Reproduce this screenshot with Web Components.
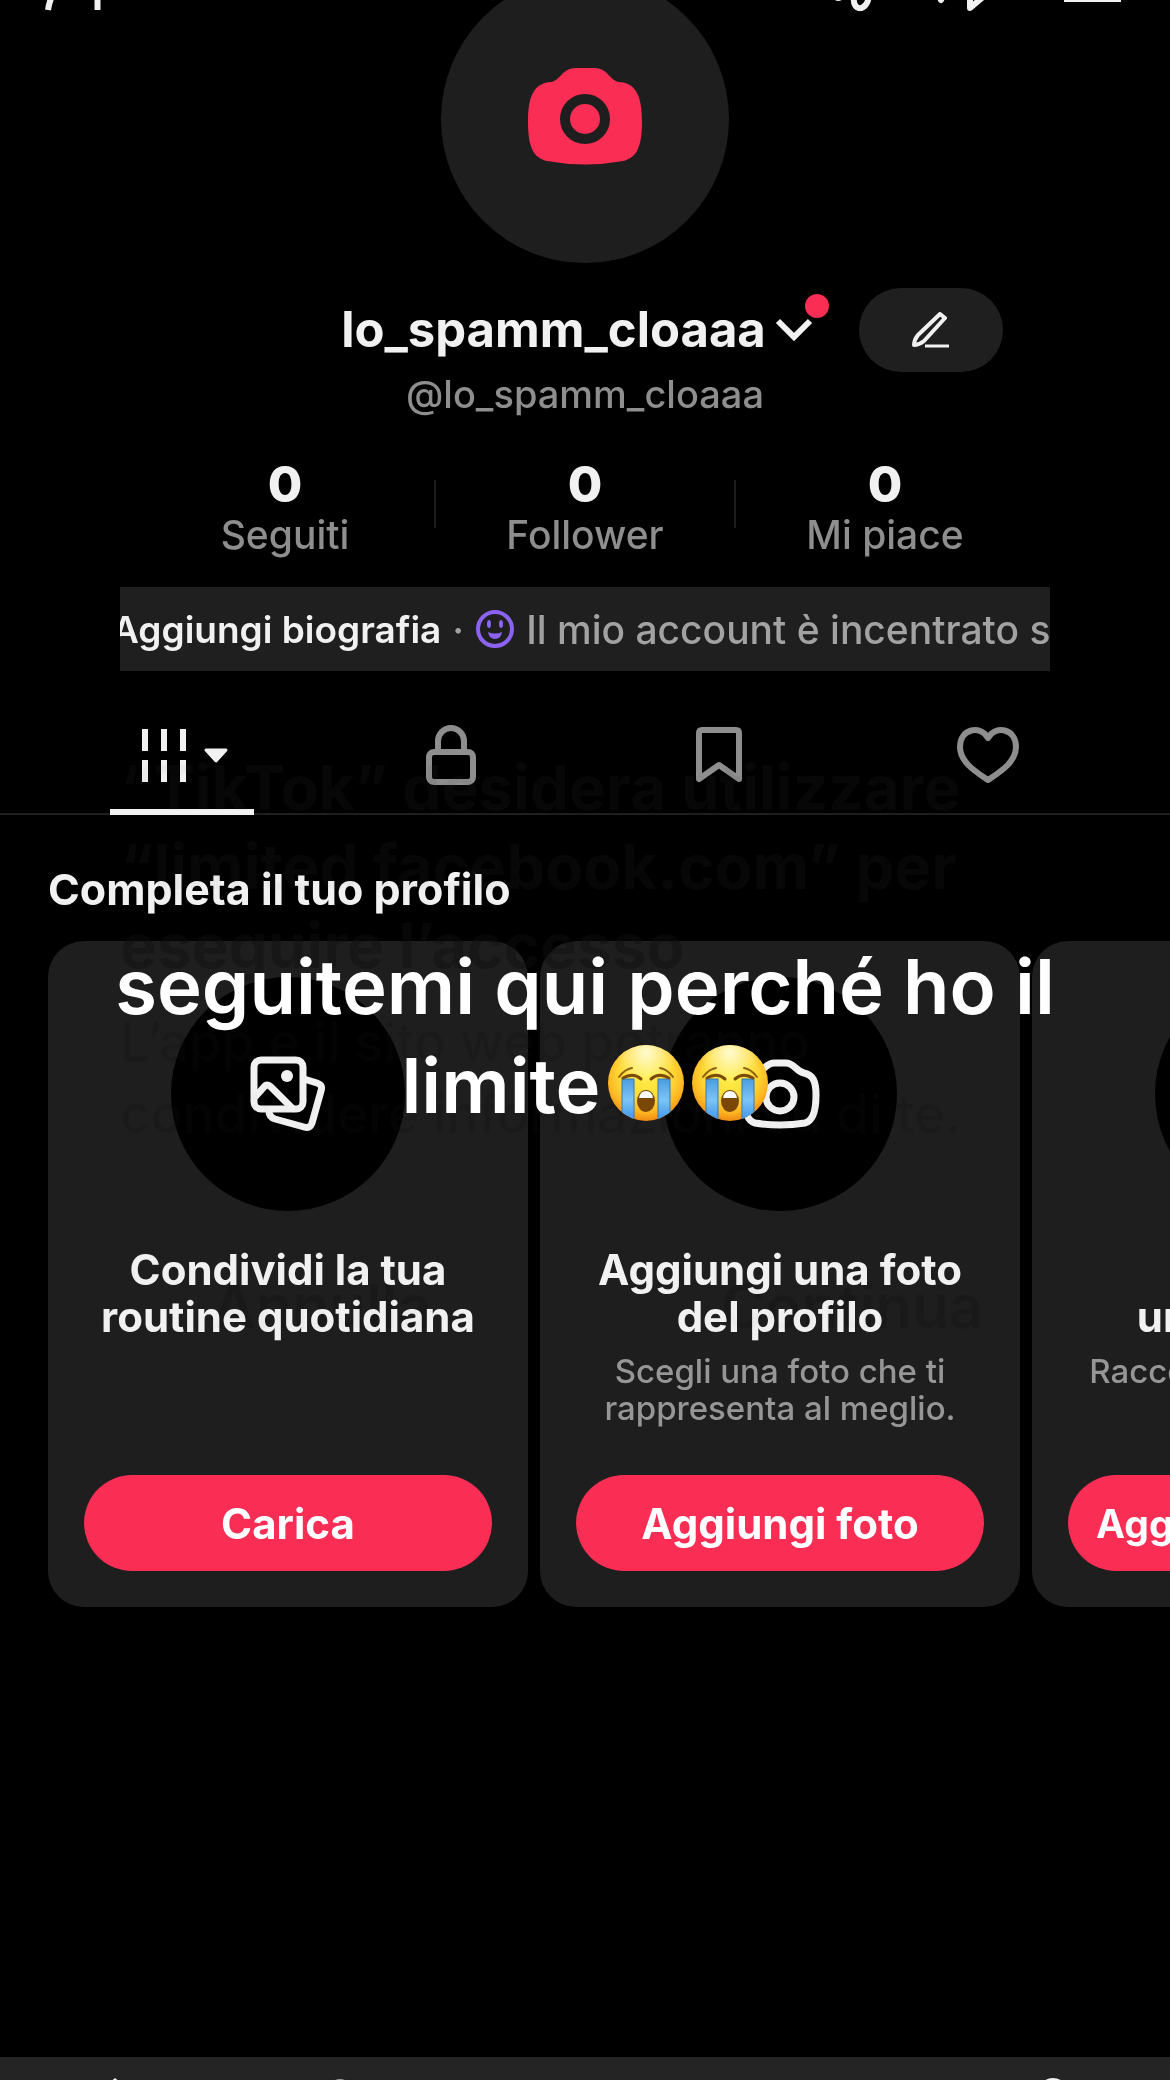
<!DOCTYPE html>
<html lang="it">
<head>
<meta charset="utf-8">
<meta name="viewport" content="width=device-width, initial-scale=1">
<title>lo_spamm_cloaaa</title>
<style>
  body {
    margin: 0;
    background: #000;
    color: #f1f1f1;
    font-family: Inter, "Liberation Sans", sans-serif;
    overflow: hidden;
  }
</style>
</head>
<body>
<profile-page></profile-page>

<script>
class TopBar extends HTMLElement {
  constructor() {
    super();
    this.attachShadow({ mode: "open" });
  }

  static get styles() {
    return /* css */ `
    :host {
      display: flex;
      justify-content: space-between;
      height: 12px;
      padding: 0 48px 0 42px;
      overflow: hidden;
    }
    div {
      display: flex;
      gap: 55px;
    }
    button {
      display: block;
      padding: 0;
      border: 0;
      background: none;
      color: inherit;
    }
    svg {
      display: block;
      fill: none;
      stroke: #f1f1f1;
      stroke-width: 6;
      stroke-linejoin: round;
    }
    `;
  }

  connectedCallback() {
    this.shadowRoot.innerHTML = /* html */ `
    <style>${TopBar.styles}</style>
    <button aria-label="Trova amici"><svg width="62" height="12"><path d="M6 10q1-7 4-14M55.500-4V10"/></svg></button>
    <div>
      <button aria-label="Monete"><svg width="44" height="12"><path d="M2-3q2 2 5 0" /><path d="M20-3C18 12 33 12 35-4"/></svg></button>
      <button aria-label="Condividi"><svg width="72" height="12"><path stroke-linecap="round" d="M8 0l3-6M37-7V8L50-3"/></svg></button>
      <button aria-label="Menu"><svg width="62" height="12"><path d="M4-1h57"/></svg></button>
    </div>`;
  }
}

class ProfileHeader extends HTMLElement {
  constructor() {
    super();
    this.attachShadow({ mode: "open" });
  }

  static get styles() {
    return /* css */ `
    :host {
      display: flex;
      flex-direction: column;
      align-items: center;
    }
    button {
      padding: 0;
      border: 0;
      background: none;
      color: inherit;
      font: inherit;
    }
    svg {
      display: block;
    }
    .avatar {
      display: grid;
      place-items: center;
      width: 288px;
      height: 288px;
      margin-top: -37px;
      border-radius: 50%;
      background: #1e1e1e;
    }
    .name-row {
      display: grid;
      grid-template-columns: 1fr auto 1fr;
      align-items: center;
      align-self: stretch;
      margin-top: 25px;
    }
    .switch {
      grid-column: 2;
      position: relative;
      display: flex;
      align-items: center;
      gap: 9px;
      padding-right: 16px;
    }
    h1 {
      margin: 0;
      font-size: 49px;
      line-height: 60px;
      font-weight: 700;
    }
    .dot {
      position: absolute;
      top: -6px;
      right: 0;
      width: 24px;
      height: 24px;
      border-radius: 50%;
      background: #fa2d54;
    }
    .edit {
      display: grid;
      place-items: center;
      width: 144px;
      height: 84px;
      margin-left: 30px;
      border-radius: 42px;
      background: #1f1f1f;
    }
    p {
      margin: 0;
      color: #8e8e8e;
      font-size: 38px;
      line-height: 44px;
      font-weight: 500;
    }
    `;
  }

  connectedCallback() {
    this.shadowRoot.innerHTML = /* html */ `
    <style>${ProfileHeader.styles}</style>
    <button class="avatar" aria-label="Aggiungi foto del profilo">
      <svg width="114" height="102" viewBox="0 0 114 102">
        <path fill="#fa2d54" d="M48 0H66C80 0 82 13 91 14C107 15 114 26 114 54C114 82 107 90 95 93Q57 100 19 93C7 90 0 82 0 54C0 26 7 15 23 14C32 13 34 0 48 0Z"/>
        <circle cx="57" cy="51" r="20" fill="none" stroke="#1e1e1e" stroke-width="10"/>
      </svg>
    </button>
    <div class="name-row">
      <button class="switch" aria-label="Cambia account">
        <h1><slot></slot></h1>
        <svg width="38" height="26" viewBox="0 0 38 26"><path d="M3 4L19 20L35 4" fill="none" stroke="#f1f1f1" stroke-width="6"/></svg>
        <span class="dot"></span>
      </button>
      <button class="edit" aria-label="Modifica profilo">
        <svg width="38" height="36" viewBox="0 0 38 36" fill="none" stroke="#f1f1f1" stroke-width="4" stroke-linejoin="round">
          <path d="M28 2L33 6L12 29Q7 33 2 33Q2 28 6 23Z"/><path d="M13 34H37" stroke-width="3"/>
        </svg>
      </button>
    </div>
    <p><slot name="handle"></slot></p>`;
  }
}

class ProfileStat extends HTMLElement {
  constructor() {
    super();
    this.attachShadow({ mode: "open" });
  }

  static get styles() {
    return /* css */ `
    :host {
      display: block;
      width: 300px;
      text-align: center;
    }
    a {
      display: block;
      color: inherit;
      text-decoration: none;
    }
    strong {
      display: block;
      font-size: 50px;
      line-height: 58px;
      font-weight: 800;
    }
    span {
      display: block;
      color: #8e8e8e;
      font-size: 39px;
      line-height: 44px;
      font-weight: 500;
    }
    `;
  }

  connectedCallback() {
    this.shadowRoot.innerHTML = /* html */ `
    <style>${ProfileStat.styles}</style>
    <a href="#">
      <strong>${this.getAttribute("value")}</strong>
      <span><slot></slot></span>
    </a>`;
  }
}

class BioStrip extends HTMLElement {
  constructor() {
    super();
    this.attachShadow({ mode: "open" });
  }

  static get styles() {
    return /* css */ `
    :host {
      display: block;
      margin: 30px 120px 0;
      background: #1f1f1f;
    }
    button {
      display: flex;
      align-items: center;
      justify-content: flex-start;
      width: 100%;
      height: 84px;
      padding: 0;
      border: 0;
      overflow: hidden;
      background: none;
      color: #a2a2a2;
      font: inherit;
      font-size: 39px;
      font-weight: 500;
      white-space: nowrap;
    }
    .track {
      display: flex;
      align-items: center;
      gap: 11px;
      margin-left: -8px;
    }
    b {
      color: #f1f1f1;
      font-size: 37px;
      font-weight: 600;
    }
    svg {
      flex: none;
    }
    `;
  }

  connectedCallback() {
    this.shadowRoot.innerHTML = /* html */ `
    <style>${BioStrip.styles}</style>
    <button>
      <span class="track">
        <b><slot name="action"></slot></b>
        <span>·</span>
        <svg width="40" height="40" viewBox="0 0 40 40">
          <circle cx="20" cy="20" r="17" fill="none" stroke="#8b63f0" stroke-width="4"/>
          <ellipse cx="14" cy="15" rx="2" ry="4" fill="#8b63f0"/><ellipse cx="26" cy="15" rx="2" ry="4" fill="#8b63f0"/>
          <path d="M13 23Q20 26 27 23Q26 30 20 30T13 23Z" fill="#8b63f0"/>
        </svg>
        <span><slot></slot></span>
      </span>
    </button>`;
  }
}

class ProfileTabs extends HTMLElement {
  constructor() {
    super();
    this.attachShadow({ mode: "open" });
  }

  static get styles() {
    return /* css */ `
    :host {
      display: grid;
      grid-template-columns: repeat(4, 1fr);
      justify-items: center;
      margin-top: 24px;
      padding: 0 48px;
      box-shadow: inset 0 -2px #1e1e1e;
    }
    button {
      display: flex;
      align-items: center;
      justify-content: center;
      gap: 17px;
      box-sizing: border-box;
      width: 144px;
      height: 120px;
      padding: 6px 0 0;
      border: 0;
      border-bottom: 6px solid transparent;
      background: none;
      color: #8e8e8e;
    }
    button[aria-selected="true"] {
      padding-left: 4px;
      color: #f1f1f1;
      border-color: #f1f1f1;
    }
    svg {
      display: block;
      fill: none;
      stroke: currentColor;
      stroke-width: 6;
      stroke-linejoin: round;
    }
    `;
  }

  connectedCallback() {
    this.setAttribute("role", "tablist");
    this.shadowRoot.innerHTML = /* html */ `
    <style>${ProfileTabs.styles}</style>
    <button role="tab" aria-selected="true" aria-label="Video">
      <svg width="46" height="56" viewBox="0 0 46 56"><path d="M4 2V24M23 2V24M42 2V24M4 33V55M23 33V55M42 33V55"/></svg>
      <svg width="24" height="16" viewBox="0 0 24 16"><path d="M2 3H22L12 14Z" fill="currentColor" stroke-width="3"/></svg>
    </button>
    <button role="tab" aria-selected="false" aria-label="Privati">
      <svg width="50" height="60" viewBox="0 0 50 60"><rect x="3" y="27" width="44" height="30" rx="5"/><path d="M12 27V16a13 13 0 0 1 26 0V27"/></svg>
    </button>
    <button role="tab" aria-selected="false" aria-label="Preferiti">
      <svg width="46" height="58" viewBox="0 0 46 58"><path d="M3 53V7Q3 4 6 4H40Q43 4 43 7V53L23 39Z"/></svg>
    </button>
    <button role="tab" aria-selected="false" aria-label="Mi piace">
      <svg width="62" height="58" viewBox="0 0 62 58"><path d="M31 54C21 47 3 37 3 21C3 2 24-1 31 12C38-1 59 2 59 21C59 37 41 47 31 54Z"/></svg>
    </button>`;
  }
}

class SetupCard extends HTMLElement {
  constructor() {
    super();
    this.attachShadow({ mode: "open" });
  }

  static get styles() {
    return /* css */ `
    :host {
      display: flex;
      flex: none;
      flex-direction: column;
      align-items: center;
      box-sizing: border-box;
      width: 480px;
      min-height: 666px;
      padding: 36px;
      border-radius: 36px;
      background: #1e1e1e;
      text-align: center;
    }
    .disc {
      display: grid;
      place-items: center;
      width: 234px;
      height: 234px;
      border-radius: 50%;
      background: #000;
    }
    h3 {
      margin: 35px 0 0;
      font-size: 42px;
      line-height: 47px;
      font-weight: 700;
      white-space: nowrap;
    }
    p {
      margin: 13px 0 0;
      color: #969696;
      font-size: 33px;
      line-height: 37px;
      font-weight: 500;
      white-space: nowrap;
    }
    button {
      align-self: stretch;
      height: 96px;
      margin-top: auto;
      padding: 0;
      border: 0;
      border-radius: 48px;
      background: #fa2d54;
      color: #fff;
      font: inherit;
      font-size: 42px;
      font-weight: 700;
      white-space: nowrap;
    }
    :host([compact]) button {
      font-size: 39px;
    }
    `;
  }

  connectedCallback() {
    this.shadowRoot.innerHTML = /* html */ `
    <style>${SetupCard.styles}</style>
    <div class="disc"><slot name="icon"></slot></div>
    <h3><slot></slot></h3>
    <p><slot name="hint"></slot></p>
    <button><slot name="action"></slot></button>`;
  }
}

class CryingFace extends HTMLElement {
  constructor() {
    super();
    this.attachShadow({ mode: "open" });
  }

  connectedCallback() {
    this.shadowRoot.innerHTML = /* html */ `
    <style>
      :host {
        display: inline-block;
        width: 78px;
        height: 78px;
        margin-left: 6px;
        vertical-align: -9px;
      }
      svg {
        display: block;
      }
    </style>
    <svg width="78" height="78" viewBox="0 0 78 78" role="img" aria-label="😭">
      <defs>
        <radialGradient id="face" cx=".5" cy=".38" r=".62">
          <stop offset="0" stop-color="#fff04a"/><stop offset=".55" stop-color="#ffdb38"/>
          <stop offset=".82" stop-color="#fdb622"/><stop offset="1" stop-color="#ee8912"/>
        </radialGradient>
        <radialGradient id="shine" cx=".5" cy=".1" r=".4">
          <stop offset="0" stop-color="#fffbd0"/><stop offset="1" stop-color="#fffbd0" stop-opacity="0"/>
        </radialGradient>
        <linearGradient id="tear" x2="0" y2="1">
          <stop offset="0" stop-color="#4b9de0"/><stop offset=".5" stop-color="#7cc4f7"/><stop offset="1" stop-color="#3c92e6"/>
        </linearGradient>
        <clipPath id="round"><circle cx="39" cy="39" r="38"/></clipPath>
      </defs>
      <circle cx="39" cy="39" r="38" fill="url(#face)"/>
      <circle cx="39" cy="39" r="38" fill="url(#shine)"/>
      <g clip-path="url(#round)" fill="url(#tear)" stroke="#3679b5" stroke-width="1">
        <rect x="15" y="35" width="12" height="42"/><rect x="51" y="35" width="12" height="42"/>
      </g>
      <g fill="none" stroke="#7b4a08" stroke-linecap="round">
        <path d="M12 33Q18 25 25 24" stroke-width="2" opacity=".85"/><path d="M66 33Q60 25 53 24" stroke-width="2" opacity=".85"/>
        <path d="M16 34Q26 28 34 35" stroke-width="3"/><path d="M44 35Q52 28 62 34" stroke-width="3"/>
      </g>
      <ellipse cx="39" cy="57" rx="9" ry="11" fill="#7a4706"/>
      <path d="M32 54Q33 47 39 47T46 54Z" fill="#fff"/>
    </svg>`;
  }
}

class VideoCaption extends HTMLElement {
  constructor() {
    super();
    this.attachShadow({ mode: "open" });
  }

  connectedCallback() {
    this.shadowRoot.innerHTML = /* html */ `
    <style>
      :host {
        position: absolute;
        inset: 937px 0 auto;
        color: #fff;
        font-size: 76px;
        line-height: 99px;
        font-weight: 600;
        text-align: center;
        pointer-events: none;
      }
    </style>
    <slot></slot>`;
  }
}

/* system prompt that is still fading out over the profile */
class FadingPrompt extends HTMLElement {
  constructor() {
    super();
    this.attachShadow({ mode: "open" });
  }

  connectedCallback() {
    this.shadowRoot.innerHTML = /* html */ `
    <style>
      :host {
        position: absolute;
        inset: 748px 96px auto 120px;
        color: #070707;
        mix-blend-mode: difference;
        white-space: nowrap;
        pointer-events: none;
      }
      h2 {
        margin: 0;
        font-size: 62px;
        line-height: 79px;
        font-weight: 700;
      }
      p {
        margin: 21px 0 0;
        color: #040404;
        font-size: 53px;
        line-height: 72px;
        font-weight: 500;
      }
      div {
        display: grid;
        grid-template-columns: 1fr 1fr;
        margin: 120px -43px 0 -63px;
        color: #050505;
        font-size: 60px;
        line-height: 72px;
        font-weight: 600;
        text-align: center;
      }
    </style>
    <h2><slot></slot></h2>
    <p><slot name="message"></slot></p>
    <div><span>Annulla</span><span>Continua</span></div>`;
  }
}

class BottomNav extends HTMLElement {
  constructor() {
    super();
    this.attachShadow({ mode: "open" });
  }

  connectedCallback() {
    this.shadowRoot.innerHTML = /* html */ `
    <style>
      :host {
        display: grid;
        grid-template-columns: repeat(5, 1fr);
        height: 23px;
        overflow: hidden;
        background: #242424;
      }
      a {
        display: grid;
        justify-content: center;
        padding-top: 21px;
      }
      svg {
        display: block;
      }
    </style>
    <a href="#" aria-label="Home"><svg width="60" height="54" viewBox="0 0 60 54"><path d="M28 0L56 24V52H0V24Z" fill="#f1f1f1"/></svg></a>
    <a href="#" aria-label="Amici"><svg width="60" height="54" viewBox="0 0 60 54"><circle cx="19" cy="13" r="10" fill="none" stroke="#a0a0a0" stroke-width="4"/></svg></a>
    <span></span>
    <span></span>
    <a href="#" aria-label="Profilo"><svg width="60" height="54" viewBox="0 0 60 54"><circle cx="30" cy="15" r="15" fill="#f1f1f1"/></svg></a>`;
  }
}

class ProfilePage extends HTMLElement {
  constructor() {
    super();
    this.attachShadow({ mode: "open" });
  }

  static get styles() {
    return /* css */ `
    :host {
      position: relative;
      display: flex;
      flex-direction: column;
      min-height: 100vh;
      overflow: hidden;
    }
    .stats {
      display: flex;
      justify-content: center;
      align-items: center;
      margin-top: 39px;
    }
    .stats i {
      width: 2px;
      height: 48px;
      margin: 0 -1px 4px;
      background: #1e1e1e;
    }
    h2 {
      margin: 48px 48px 26px;
      font-size: 43px;
      line-height: 52px;
      font-weight: 700;
    }
    .cards {
      display: flex;
      gap: 12px;
      padding-left: 48px;
      overflow: hidden;
    }
    bottom-nav {
      margin-top: auto;
    }
    .icon {
      display: block;
      fill: none;
      stroke: #f1f1f1;
      stroke-width: 7;
      stroke-linejoin: round;
    }
    `;
  }

  connectedCallback() {
    this.shadowRoot.innerHTML = /* html */ `
    <style>${ProfilePage.styles}</style>
    <top-bar></top-bar>
    <profile-header>lo_spamm_cloaaa<span slot="handle">@lo_spamm_cloaaa</span></profile-header>
    <div class="stats">
      <profile-stat value="0">Seguiti</profile-stat><i></i>
      <profile-stat value="0">Follower</profile-stat><i></i>
      <profile-stat value="0">Mi piace</profile-stat>
    </div>
    <bio-strip><span slot="action">Aggiungi biografia</span>Il mio account è incentrato su</bio-strip>
    <profile-tabs></profile-tabs>
    <h2>Completa il tuo profilo</h2>
    <div class="cards">
      <setup-card>
        <svg slot="icon" class="icon" width="76" height="76" viewBox="0 0 76 76">
          <rect x="4" y="4" width="49" height="49" rx="7"/>
          <path d="M5 41L14 31Q17 27 21 31L43 53"/>
          <circle cx="37" cy="20" r="6" fill="#f1f1f1" stroke="none"/>
          <path d="M54 23L67 27Q73 29 71 35L62 67Q60 73 54 71L25 63Q19 61 19 55"/>
        </svg>
        <span>Condividi la tua<br>routine quotidiana</span>
        <span slot="action">Carica</span>
      </setup-card>
      <setup-card>
        <svg slot="icon" class="icon" width="80" height="70" viewBox="0 0 80 70">
          <path d="M34 4H46C54 4 56 12 64 14C73 16 76 22 76 36C76 52 73 62 65 64Q40 68 15 64C7 62 4 52 4 36C4 22 7 16 16 14C24 12 26 4 34 4Z"/>
          <circle cx="40" cy="38" r="14"/>
        </svg>
        <span>Aggiungi una foto<br>del profilo</span>
        <span slot="hint">Scegli una foto che ti<br>rappresenta al meglio.</span>
        <span slot="action">Aggiungi foto</span>
      </setup-card>
      <setup-card compact>
        <span>Aggiungi<br>una biografia</span>
        <span slot="hint">Racconta chi sei a tutti.</span>
        <span slot="action">Aggiungi biografia</span>
      </setup-card>
    </div>
    <fading-prompt>“TikTok” desidera utilizzare<br>“limited facebook.com” per<br>eseguire l’accesso<span slot="message">L’app e il sito web potranno<br>condividere informazioni su di te.</span></fading-prompt>
    <video-caption>seguitemi qui perché ho il<br>limite<crying-face></crying-face><crying-face></crying-face></video-caption>
    <bottom-nav></bottom-nav>`;
  }
}

customElements.define("top-bar", TopBar);
customElements.define("profile-header", ProfileHeader);
customElements.define("profile-stat", ProfileStat);
customElements.define("bio-strip", BioStrip);
customElements.define("profile-tabs", ProfileTabs);
customElements.define("setup-card", SetupCard);
customElements.define("crying-face", CryingFace);
customElements.define("video-caption", VideoCaption);
customElements.define("fading-prompt", FadingPrompt);
customElements.define("bottom-nav", BottomNav);
customElements.define("profile-page", ProfilePage);
</script>
</body>
</html>
